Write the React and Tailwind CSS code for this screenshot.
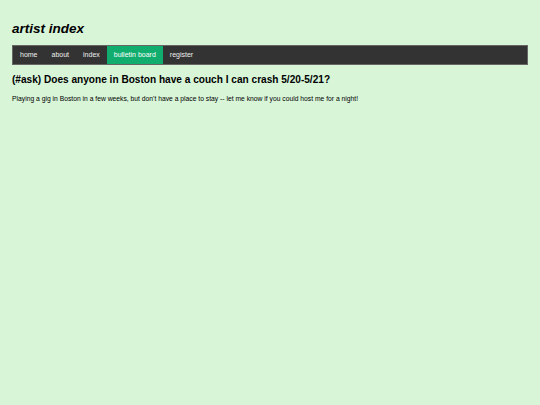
import React from 'react'

const links = ['home', 'about', 'index', 'bulletin board', 'register']

export default function App() {
    return (
        <div className="min-h-[405px] w-full bg-[#d8f5d8] px-3 font-['Liberation_Sans',Arial,sans-serif] text-black">
            <h1 className="pt-[20px] text-[13.5px] font-bold italic leading-[17px]">
                artist index
            </h1>
            <nav className="mt-[8px] flex h-[20px] border border-[#666] bg-[#333]">
                {links.map((link) => (
                    <a
                        key={link}
                        href="#"
                        className={
                            'flex items-center px-[7px] text-[7px] text-[#eee] ' +
                            (link === 'bulletin board' ? 'bg-[#10ad6e] text-white' : '')
                        }
                    >
                        {link}
                    </a>
                ))}
            </nav>
            <h2 className="mt-[9px] text-[10.1px] font-bold leading-[12px]">
                (#ask) Does anyone in Boston have a couch I can crash 5/20-5/21?
            </h2>
            <p className="mt-[9px] text-[6.75px] leading-[8px]">
                Playing a gig in Boston in a few weeks, but don't have a place to stay -- let me know if you could host me for a night!
            </p>
        </div>
    )
}
